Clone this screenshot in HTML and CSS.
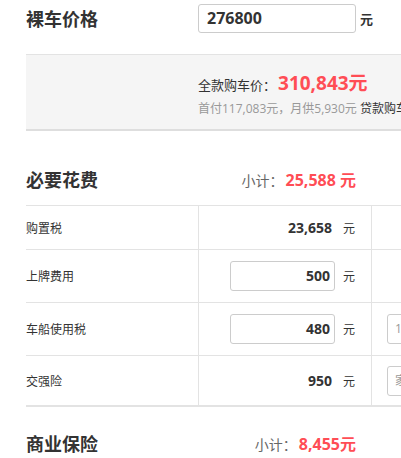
FILE: index.html
```html
<!DOCTYPE html>
<html lang="zh-CN">
<head>
<meta charset="utf-8">
<link rel="stylesheet" href="styles.css">
</head>
<body>
<div class="page">
  <div class="price-row">
    <div class="price-title">裸车价格</div>
    <div class="price-input"><span class="box">276800</span><span class="unit">元</span></div>
  </div>

  <div class="summary">
    <div class="sum-line1">全款购车价：<span class="sum-red">310,843元</span></div>
    <div class="sum-line2"><span class="gray">首付117,083元，月供5,930元</span> <span class="dark">贷款购车计算</span></div>
  </div>

  <div class="sec-head">
    <div class="sec-title">必要花费</div>
    <div class="sec-sub">小计：<span class="sec-red">25,588 元</span></div>
  </div>

  <div class="table">
    <div class="row r1">
      <div class="c-label">购置税</div>
      <div class="c-val"><span class="num">23,658</span><span class="unit">元</span></div>
      <div class="c-extra"></div>
    </div>
    <div class="row r2">
      <div class="c-label">上牌费用</div>
      <div class="c-val"><span class="inp">500</span><span class="unit">元</span></div>
      <div class="c-extra"></div>
    </div>
    <div class="row r3">
      <div class="c-label">车船使用税</div>
      <div class="c-val"><span class="inp">480</span><span class="unit">元</span></div>
      <div class="c-extra"><span class="sel">1.6L</span></div>
    </div>
    <div class="row r4">
      <div class="c-label">交强险</div>
      <div class="c-val"><span class="num">950</span><span class="unit">元</span></div>
      <div class="c-extra"><span class="sel">家用6座以下</span></div>
    </div>
  </div>

  <div class="sec-head sec2">
    <div class="sec-title">商业保险</div>
    <div class="sec-sub">小计：<span class="sec-red">8,455元</span></div>
  </div>
</div>
</body>
</html>
```
FILE: styles.css
```css
html, body {
  margin: 0;
  padding: 0;
  background: #fff;
  overflow: hidden;
}
body {
  font-family: "Open Sans", "Noto Sans CJK SC", sans-serif;
  color: #333;
}
.page {
  margin-left: 26px;
  width: 600px;
}
.price-row {
  display: flex;
  align-items: center;
  height: 37px;
}
.price-title {
  width: 172px;
  font-size: 18px;
  font-weight: bold;
  color: #333;
  line-height: 24px;
}
.price-input {
  display: flex;
  align-items: center;
}
.price-input .box {
  box-sizing: border-box;
  width: 158px;
  height: 29px;
  border: 1px solid #ccc;
  border-radius: 3px;
  padding-left: 8px;
  font-size: 16px;
  font-weight: bold;
  line-height: 27px;
  color: #333;
}
.price-input .unit {
  margin-left: 4px;
  font-size: 13px;
  font-weight: bold;
}
.summary {
  margin-top: 17px;
  box-sizing: border-box;
  height: 77px;
  background: #f5f5f5;
  border-top: 1px solid #e3e3e3;
  border-bottom: 2px solid #dedede;
  padding: 14px 0 0 172px;
}
.sum-line1 {
  font-size: 13px;
  line-height: 28px;
  color: #333;
}
.sum-red {
  color: #ff4d55;
  font-size: 19px;
  font-weight: bold;
  margin-left: 2px;
}
.sum-line2 {
  font-size: 12px;
  line-height: 20px;
  white-space: nowrap;
}
.gray { color: #999; }
.dark { color: #333; }
.sec-head {
  display: flex;
  align-items: center;
  width: 330px;
  height: 48px;
  margin-top: 24px;
}
.sec-title {
  flex: 1;
  font-size: 18px;
  font-weight: bold;
  color: #333;
}
.sec-sub {
  font-size: 14px;
  color: #666;
}
.sec-red {
  color: #ff4d55;
  font-size: 16px;
  font-weight: bold;
  margin-left: 2px;
}
.table {
  margin-top: 2px;
  border-top: 1px solid #e3e3e3;
  border-bottom: 2px solid #e3e3e3;
}
.row {
  display: grid;
  grid-template-columns: 172px 174px 1fr;
  border-bottom: 1px solid #e3e3e3;
}
.row:last-child { border-bottom: none; }
.r1 { height: 43px; }
.r2 { height: 52px; }
.r3 { height: 52px; }
.r4 { height: 49px; }
.row > div {
  display: flex;
  align-items: center;
}
.c-label {
  font-size: 12px;
  color: #333;
}
.c-val {
  border-left: 1px solid #e3e3e3;
  border-right: 1px solid #e3e3e3;
  justify-content: flex-end;
  padding-right: 16px;
}
.c-val .num {
  font-size: 14px;
  font-weight: bold;
  color: #333;
}
.c-val .unit {
  font-size: 12px;
  margin-left: 11px;
  color: #333;
}
.c-val .inp {
  box-sizing: border-box;
  width: 105px;
  height: 30px;
  border: 1px solid #ccc;
  border-radius: 3px;
  text-align: right;
  padding-right: 4px;
  font-size: 14px;
  font-weight: bold;
  line-height: 28px;
}
.c-val .inp + .unit { margin-left: 8px; }
.c-extra {
  padding-left: 15px;
}
.sel {
  box-sizing: border-box;
  width: 120px;
  height: 30px;
  border: 1px solid #ccc;
  border-radius: 3px;
  padding-left: 7px;
  font-size: 12px;
  line-height: 28px;
  color: #999;
}
.sec2 {
  margin-top: 12px;
}
```
